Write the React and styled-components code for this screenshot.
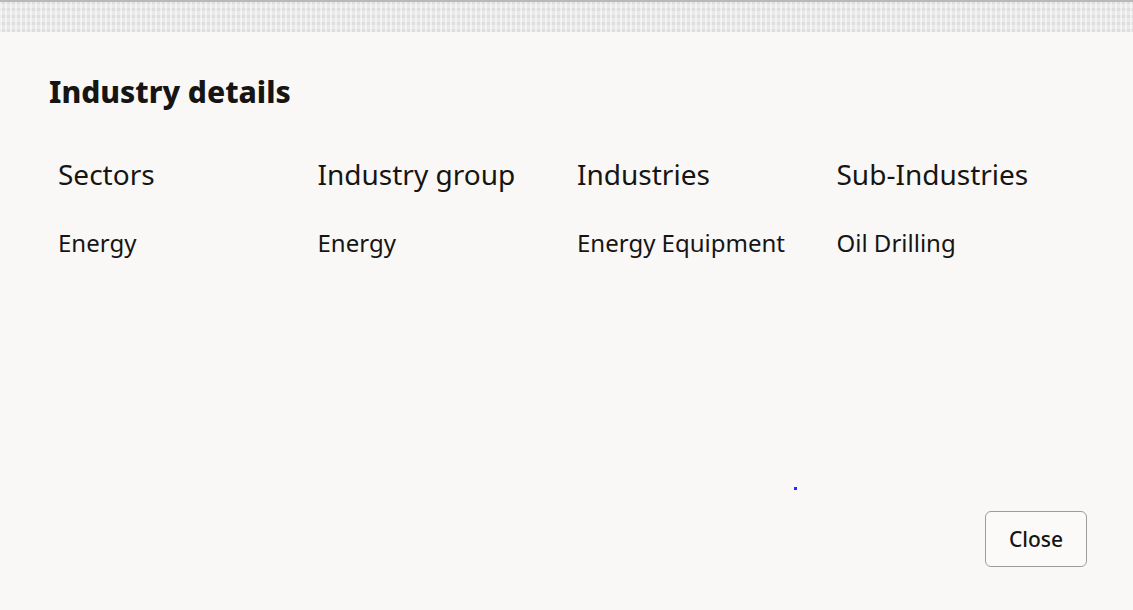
import React from 'react';
import styled, { createGlobalStyle } from 'styled-components';

const GlobalStyle = createGlobalStyle`
    html, body {
        margin: 0;
        padding: 0;
        background: #f9f8f6;
        font-family: "Noto Sans", "Open Sans", sans-serif;
        color: #161513;
    }
`;

const columns = [
    { label: 'Sectors', value: 'Energy' },
    { label: 'Industry group', value: 'Energy' },
    { label: 'Industries', value: 'Energy Equipment' },
    { label: 'Sub-Industries', value: 'Oil Drilling' },
];

function App() {
    return (
        <Page>
            <GlobalStyle />
            <Backdrop />
            <Dialog>
                <Title>Industry details</Title>
                <Grid>
                    {columns.map((col) => (
                        <Cell key={col.label}>
                            <Label>{col.label}</Label>
                            <Value>{col.value}</Value>
                        </Cell>
                    ))}
                </Grid>
                <Footer>
                    <Dot />
                    <CloseButton>Close</CloseButton>
                </Footer>
            </Dialog>
        </Page>
    );
}

const Page = styled.div`
    width: 1133px;
    height: 610px;
    display: flex;
    flex-direction: column;
    overflow: hidden;
`;

const Backdrop = styled.div`
    height: 32px;
    flex-shrink: 0;
    border-top: 2px solid #b9b9b9;
    box-sizing: border-box;
    background-color: #e9e9e9;
    background-image:
        repeating-linear-gradient(90deg, rgba(255, 255, 255, 0.5) 0 2px, transparent 2px 5px),
        repeating-linear-gradient(0deg, rgba(215, 215, 215, 0.6) 0 3px, transparent 3px 7px);
`;

const Dialog = styled.div`
    flex: 1;
    display: flex;
    flex-direction: column;
    padding: 40px 46px 43px 49px;
    background: #f9f8f6;
`;

const Title = styled.h1`
    margin: 0;
    font-size: 30px;
    font-weight: 800;
    line-height: 40px;
    letter-spacing: 0;
`;

const Grid = styled.div`
    display: grid;
    grid-template-columns: repeat(4, 1fr);
    margin-top: 44px;
`;

const Cell = styled.div`
    display: flex;
    flex-direction: column;
    padding-left: 9px;
    gap: 35px;
`;

const Label = styled.div`
    font-size: 28px;
    line-height: 36px;
`;

const Value = styled.div`
    font-size: 24px;
    line-height: 32px;
`;

const Footer = styled.div`
    margin-top: auto;
    display: flex;
    justify-content: flex-end;
    position: relative;
`;

const Dot = styled.span`
    position: absolute;
    left: 745px;
    top: -24px;
    width: 3px;
    height: 3px;
    background: #2a2aff;
`;

const CloseButton = styled.button`
    width: 102px;
    height: 56px;
    border: 1px solid #9e9c99;
    border-radius: 6px;
    background: #fbfaf9;
    font-family: "Noto Sans", "Open Sans", sans-serif;
    font-size: 21px;
    font-weight: 500;
    color: #161513;
    cursor: pointer;
`;

export default App;
